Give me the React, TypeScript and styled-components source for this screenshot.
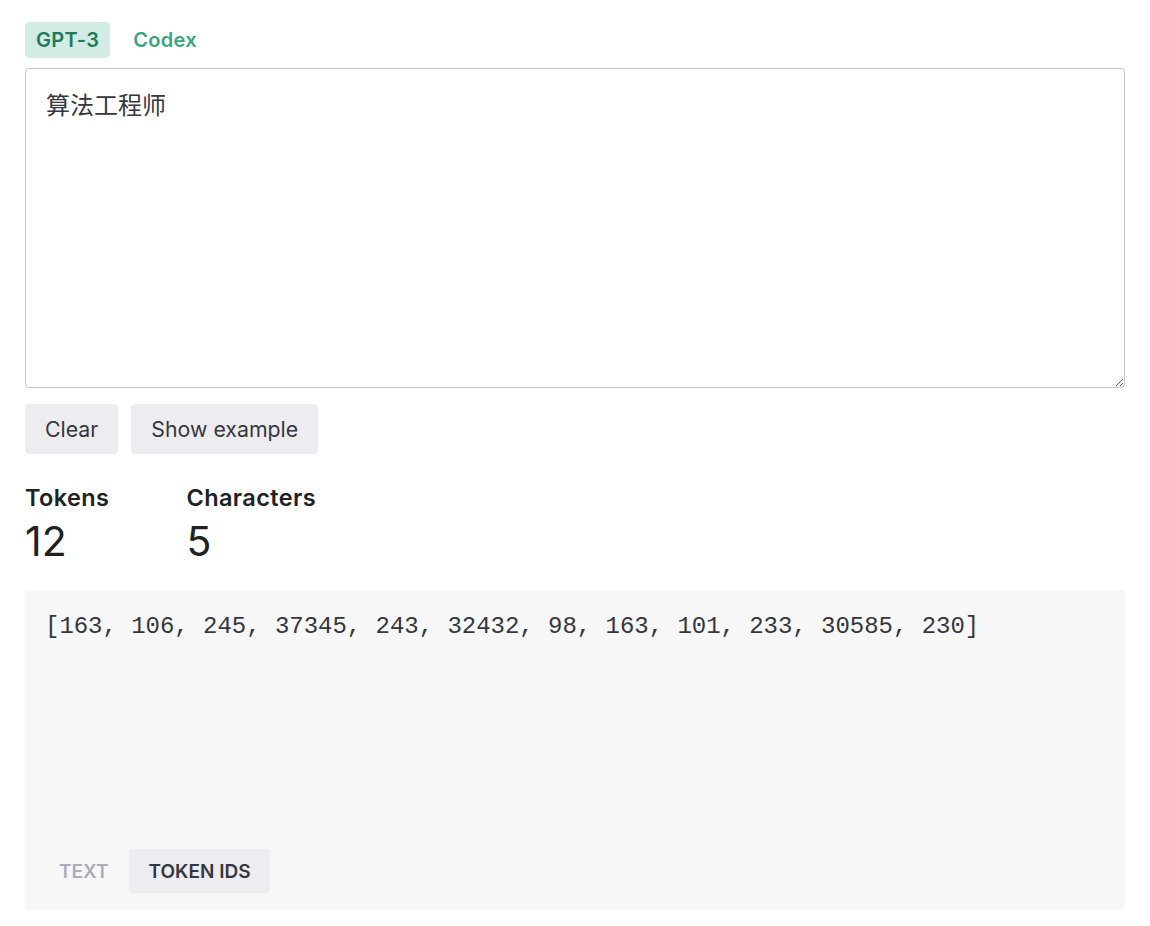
import React, { useState } from "react";
import styled, { createGlobalStyle } from "styled-components";

const GlobalStyle = createGlobalStyle`
  body {
    margin: 0;
    background: #fff;
    font-family: Inter, "Noto Sans", "Noto Sans CJK SC", sans-serif;
    color: #202123;
  }
`;

const TOKENS = [163, 106, 245, 37345, 243, 32432, 98, 163, 101, 233, 30585, 230];

const App = () => {
  const [model, setModel] = useState("gpt3");
  const [view, setView] = useState("ids");
  const [text, setText] = useState("算法工程师");

  return (
    <>
      <GlobalStyle />
      <Page>
        <ModelTabs>
          <ModelTab active={model === "gpt3"} onClick={() => setModel("gpt3")}>
            GPT-3
          </ModelTab>
          <ModelTab active={model === "codex"} onClick={() => setModel("codex")}>
            Codex
          </ModelTab>
        </ModelTabs>

        <Input value={text} onChange={(e) => setText(e.target.value)} />

        <Actions>
          <ActionBtn onClick={() => setText("")}>Clear</ActionBtn>
          <ActionBtn>Show example</ActionBtn>
        </Actions>

        <Stats>
          <Stat>
            <StatLabel>Tokens</StatLabel>
            <StatValue>{TOKENS.length}</StatValue>
          </Stat>
          <Stat>
            <StatLabel>Characters</StatLabel>
            <StatValue>{text.length}</StatValue>
          </Stat>
        </Stats>

        <Output>
          <OutputText>[{TOKENS.join(", ")}]</OutputText>
          <ViewTabs>
            <ViewTab active={view === "text"} onClick={() => setView("text")}>
              Text
            </ViewTab>
            <ViewTab active={view === "ids"} onClick={() => setView("ids")}>
              Token IDs
            </ViewTab>
          </ViewTabs>
        </Output>
      </Page>
    </>
  );
};

const Page = styled.div`
  width: 1100px;
  padding: 22px 25px 16px;
`;

const ModelTabs = styled.div`
  display: flex;
  gap: 12px;
  margin-bottom: 10px;
`;

const ModelTab = styled.button<{ active?: boolean }>`
  height: 36px;
  padding: 0 11px;
  border: none;
  border-radius: 5px;
  font-family: Inter, sans-serif;
  font-size: 20px;
  font-weight: 600;
  letter-spacing: 0.3px;
  cursor: pointer;
  background: ${(p) => (p.active ? "#d2ebe3" : "transparent")};
  color: ${(p) => (p.active ? "#1d7a5e" : "#3aa57f")};
`;

const Input = styled.textarea`
  display: block;
  box-sizing: border-box;
  width: 1100px;
  height: 320px;
  padding: 20px 20px;
  border: 1px solid #c5c5d2;
  border-radius: 4px;
  font-family: Inter, "Noto Sans CJK SC", sans-serif;
  font-size: 24px;
  line-height: 34px;
  color: #353740;
  resize: vertical;
  outline: none;
`;

const Actions = styled.div`
  display: flex;
  gap: 13px;
  margin-top: 16px;
`;

const ActionBtn = styled.button`
  height: 50px;
  padding: 0 20px;
  border: none;
  border-radius: 4px;
  background: #ececf1;
  color: #353740;
  font-family: Inter, sans-serif;
  font-size: 21.3px;
  cursor: pointer;
`;

const Stats = styled.div`
  display: flex;
  gap: 77px;
  margin-top: 29px;
`;

const Stat = styled.div`
  display: flex;
  flex-direction: column;
`;

const StatLabel = styled.div`
  font-size: 23.5px;
  font-weight: 600;
  line-height: 30px;
  letter-spacing: 0.4px;
  color: #202123;
`;

const StatValue = styled.div`
  margin-top: 4px;
  font-size: 41px;
  line-height: 48px;
  color: #202123;
`;

const Output = styled.div`
  box-sizing: border-box;
  height: 320px;
  margin-top: 25px;
  padding: 20px 20px 17px;
  background: #f7f7f8;
  border-radius: 4px;
  display: flex;
  flex-direction: column;
  justify-content: space-between;
`;

const OutputText = styled.div`
  font-family: "Liberation Mono", "DejaVu Sans Mono", monospace;
  font-size: 24px;
  line-height: 34px;
  letter-spacing: -0.03px;
  color: #353740;
`;

const ViewTabs = styled.div`
  display: flex;
  margin-left: -6px;
`;

const ViewTab = styled.button<{ active?: boolean }>`
  height: 44px;
  padding: 0 20px;
  border: none;
  border-radius: 4px;
  font-family: Inter, sans-serif;
  font-size: 19px;
  font-weight: 600;
  text-transform: uppercase;
  cursor: pointer;
  background: ${(p) => (p.active ? "#ececf1" : "transparent")};
  color: ${(p) => (p.active ? "#353740" : "#acacbe")};
`;

export default App;
